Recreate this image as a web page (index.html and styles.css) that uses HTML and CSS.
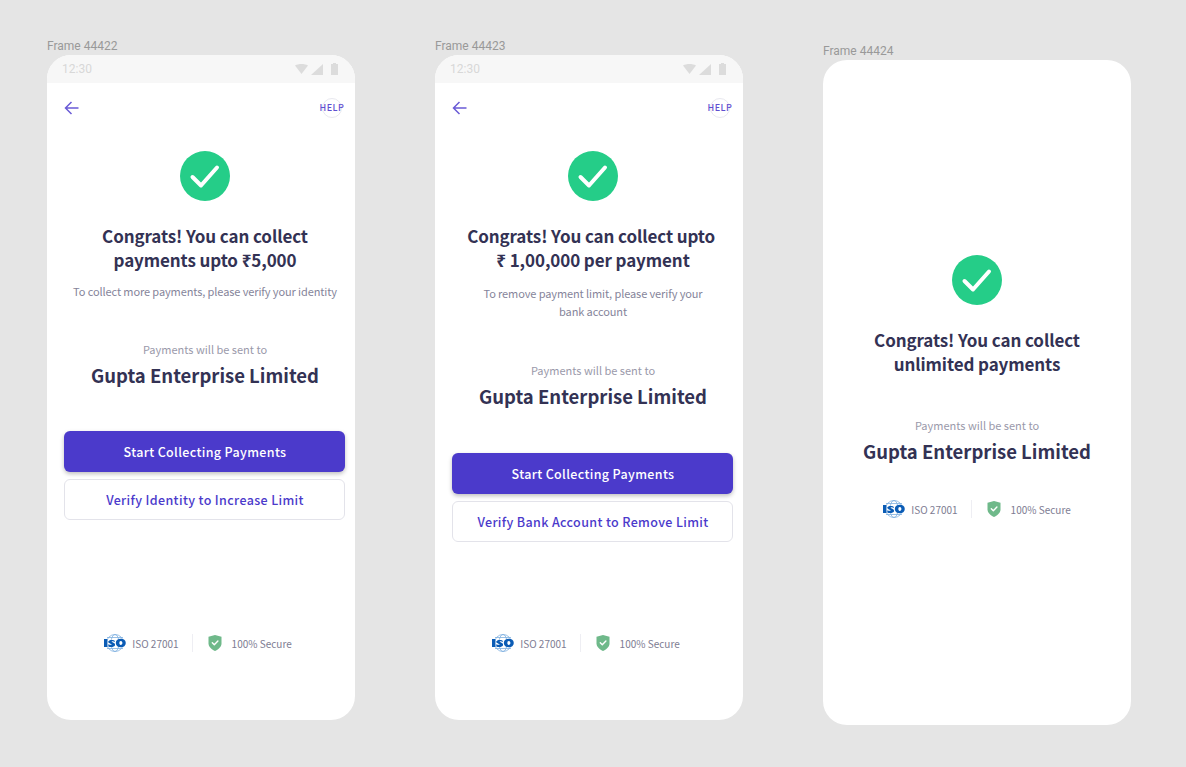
FILE: index.html
```html
<!DOCTYPE html>
<html lang="en">
<head>
    <meta charset="UTF-8">
    <meta name="viewport" content="width=device-width, initial-scale=1.0">
    <title>Payment limit screens</title>
    <link rel="stylesheet" href="styles.css">
</head>
<body>
    <svg class="icon-defs" width="0" height="0">
        <symbol id="tick" viewBox="0 0 50 50">
            <circle cx="25" cy="25" r="25" fill="#25cd88"/>
            <path d="M12.5 26 L21 34.5 L37 16.5" fill="none" stroke="#fff" stroke-width="4" stroke-linecap="round" stroke-linejoin="round"/>
        </symbol>
        <symbol id="iso" viewBox="0 0 22 18">
            <ellipse cx="11" cy="9" rx="8.5" ry="8.5" fill="none" stroke="#7fb0e0" stroke-width=".8"/>
            <ellipse cx="11" cy="9" rx="4" ry="8.5" fill="none" stroke="#7fb0e0" stroke-width=".8"/>
            <path d="M3 3.500h16M3 14.500h16" stroke="#7fb0e0" stroke-width=".8"/>
            <path d="M0 5h3.400v8H0z" fill="#0b5cb5"/>
            <path d="M11 7c-.6-1-5-1.900-6.600.2-1.200 2 3.800 2.400 3.400 3.400-.3.7-2.400.3-3.500-.4v2.300c2 1 6.300.8 6.800-1.500.4-2.300-3.900-2.600-3.500-3.400.2-.5 2-.3 3.400.2z" fill="#0b5cb5"/>
            <path d="M16.800 4.800c-2.700 0-5 1.400-5 4.200s2.300 4.200 5 4.200 5-1.400 5-4.200-2.300-4.200-5-4.200zm0 2.300c1 0 1.600.8 1.600 1.900s-.6 1.900-1.600 1.900-1.600-.8-1.600-1.900.6-1.900 1.600-1.900z" fill="#0b5cb5"/>
        </symbol>
        <symbol id="shield" viewBox="0 0 14 16">
            <path d="M0.500 1.800 L7 0 L13.500 1.800 V8.500 C13.500 12 10 14.700 7 16 C4 14.700 .5 12 .5 8.500 Z" fill="#6fb98a"/>
            <path d="M4.300 7.800 L6.300 9.800 L9.900 6.100" fill="none" stroke="#fff" stroke-width="1.400" stroke-linecap="round" stroke-linejoin="round"/>
        </symbol>
    </svg>

    <div class="canvas">
        <div class="frame">
            <div class="frame-label">Frame 44422</div>
            <div class="phone">
                <div class="status-bar">
                    <span class="clock">12:30</span>
                    <span class="status-icons">
                        <svg width="13" height="10" viewBox="0 0 13 10"><path d="M0 1.500 C3.500 -.5 9.500 -.5 13 1.500 L6.500 10 Z" fill="#dcdcdc"/></svg>
                        <svg width="12" height="11" viewBox="0 0 12 11"><path d="M12 0 V11 H0 Z" fill="#dcdcdc"/></svg>
                        <svg class="battery" width="7" height="12" viewBox="0 0 7 12"><path d="M2 0 H5 V1 H7 V12 H0 V1 H2 Z" fill="#dcdcdc"/></svg>
                    </span>
                </div>
                <div class="nav-bar">
                    <svg class="back" width="16" height="14" viewBox="0 0 16 14"><path d="M14.500 7 H1.500 M7.500 1 L1.500 7 L7.500 13" fill="none" stroke="#6a5bd6" stroke-width="1.500"/></svg>
                    <span class="help">HELP</span>
                </div>
                <div class="content first">
                    <svg class="tick"><use href="#tick"/></svg>
                    <h2 class="title">Congrats! You can collect<br>payments upto ₹5,000</h2>
                    <p class="note">To collect more payments, please verify your identity</p>
                    <p class="sent-label gap-one">Payments will be sent to</p>
                    <p class="company">Gupta Enterprise Limited</p>
                    <button class="btn btn-primary">Start Collecting Payments</button>
                    <button class="btn btn-outline">Verify Identity to Increase Limit</button>
                </div>
                <div class="trust bottom">
                    <svg class="iso"><use href="#iso"/></svg>
                    <span class="iso-text">ISO 27001</span>
                    <i class="divider"></i>
                    <svg class="shield"><use href="#shield"/></svg>
                    <span>100% Secure</span>
                </div>
            </div>
        </div>

        <div class="frame">
            <div class="frame-label">Frame 44423</div>
            <div class="phone">
                <div class="status-bar">
                    <span class="clock">12:30</span>
                    <span class="status-icons">
                        <svg width="13" height="10" viewBox="0 0 13 10"><path d="M0 1.500 C3.500 -.5 9.500 -.5 13 1.500 L6.500 10 Z" fill="#dcdcdc"/></svg>
                        <svg width="12" height="11" viewBox="0 0 12 11"><path d="M12 0 V11 H0 Z" fill="#dcdcdc"/></svg>
                        <svg class="battery" width="7" height="12" viewBox="0 0 7 12"><path d="M2 0 H5 V1 H7 V12 H0 V1 H2 Z" fill="#dcdcdc"/></svg>
                    </span>
                </div>
                <div class="nav-bar">
                    <svg class="back" width="16" height="14" viewBox="0 0 16 14"><path d="M14.500 7 H1.500 M7.500 1 L1.500 7 L7.500 13" fill="none" stroke="#6a5bd6" stroke-width="1.500"/></svg>
                    <span class="help">HELP</span>
                </div>
                <div class="content first">
                    <svg class="tick"><use href="#tick"/></svg>
                    <h2 class="title">Congrats! You can collect upto&nbsp;<br>₹ 1,00,000 per payment</h2>
                    <p class="note note-two">To remove payment limit, please verify your<br>bank account</p>
                    <p class="sent-label gap-one">Payments will be sent to</p>
                    <p class="company">Gupta Enterprise Limited</p>
                    <button class="btn btn-primary">Start Collecting Payments</button>
                    <button class="btn btn-outline">Verify Bank Account to Remove Limit</button>
                </div>
                <div class="trust bottom">
                    <svg class="iso"><use href="#iso"/></svg>
                    <span class="iso-text">ISO 27001</span>
                    <i class="divider"></i>
                    <svg class="shield"><use href="#shield"/></svg>
                    <span>100% Secure</span>
                </div>
            </div>
        </div>

        <div class="frame frame-low">
            <div class="frame-label">Frame 44424</div>
            <div class="phone">
                <div class="content last">
                    <svg class="tick"><use href="#tick"/></svg>
                    <h2 class="title">Congrats! You can collect<br>unlimited payments</h2>
                    <p class="sent-label gap-two">Payments will be sent to</p>
                    <p class="company">Gupta Enterprise Limited</p>
                    <div class="trust inline">
                        <svg class="iso"><use href="#iso"/></svg>
                        <span class="iso-text">ISO 27001</span>
                        <i class="divider"></i>
                        <svg class="shield"><use href="#shield"/></svg>
                        <span>100% Secure</span>
                    </div>
                </div>
            </div>
        </div>
    </div>
</body>
</html>
```

FILE: styles.css
```css
* {
    box-sizing: border-box;
}

body {
    margin: 0;
    height: 767px;
    overflow: hidden;
    background-color: #e5e5e5;
    font-family: "Noto Sans CJK SC", "Noto Sans", sans-serif;
}

.icon-defs {
    position: absolute;
}

.canvas {
    display: flex;
    gap: 80px;
    padding: 39px 0 0 47px;
}

.frame {
    width: 308px;
}

.frame-low {
    margin-top: 5px;
}

.frame-label {
    height: 16px;
    font-family: Roboto, sans-serif;
    font-size: 12px;
    line-height: 15px;
    color: #999;
}

.phone {
    display: flex;
    flex-direction: column;
    height: 665px;
    background: white;
    border-radius: 24px;
    overflow: hidden;
}

.status-bar {
    display: flex;
    align-items: center;
    justify-content: space-between;
    height: 28px;
    padding: 0 17px 0 15px;
    background: #f7f7f7;
}

.clock {
    font-family: Roboto, sans-serif;
    font-size: 12px;
    color: #d8d8d8;
}

.status-icons {
    display: flex;
    align-items: center;
    gap: 3px;
}

.battery {
    margin-left: 5px;
}

.nav-bar {
    display: flex;
    align-items: center;
    justify-content: space-between;
    height: 50px;
    padding: 0 13px 0 17px;
}

.help {
    display: flex;
    align-items: center;
    justify-content: center;
    width: 20px;
    height: 20px;
    padding-bottom: 1px;
    border: 1px solid #e8e8ef;
    border-radius: 50%;
    font-size: 9px;
    font-weight: 500;
    letter-spacing: 0.5px;
    color: #5f4fd0;
    white-space: nowrap;
}

.content {
    display: flex;
    flex-direction: column;
    align-items: center;
    text-align: center;
}

.content.first {
    padding: 18px 0 0 8px;
}

.content.last {
    padding-top: 195px;
}

.tick {
    width: 50px;
    height: 50px;
}

.title {
    margin: 23px 0 0;
    font-size: 17px;
    font-weight: 700;
    line-height: 24px;
    letter-spacing: -0.1px;
    color: #333254;
}

.note {
    margin: 10px 0 0;
    font-size: 11px;
    line-height: 18px;
    letter-spacing: -0.1px;
    color: #85849a;
}

.note-two {
    margin: 12px 0 1px;
}

.sent-label {
    margin: 0;
    font-size: 11px;
    line-height: 16px;
    color: #9a99aa;
}

.gap-one {
    margin-top: 41px;
}

.gap-two {
    margin-top: 41px;
}

.company {
    margin: 4px 0 0;
    font-size: 18.5px;
    font-weight: 700;
    line-height: 28px;
    color: #333254;
}

.btn {
    display: block;
    width: 281px;
    height: 41px;
    margin-right: 2px;
    padding: 0 0 0 2px;
    border-radius: 6px;
    font-family: inherit;
    font-size: 12.5px;
    font-weight: 500;
    letter-spacing: 0.36px;
}

.btn-primary {
    margin-top: 42px;
    border: none;
    background: #4b3acb;
    color: white;
    box-shadow: 0 2px 4px rgba(0,0,0,0.25);
}

.note-two ~ .btn-primary {
    margin-top: 43px;
}

.btn-outline {
    margin-top: 7px;
    border: 1px solid #e3e3ea;
    background: white;
    color: #4b3acb;
}

.trust {
    display: flex;
    align-items: center;
    justify-content: center;
    font-size: 10px;
    color: #7d7c92;
}

.trust.bottom {
    margin-top: auto;
    margin-bottom: 68px;
    padding-right: 6px;
}

.trust.inline {
    margin-top: 35px;
}

.iso {
    width: 22px;
    height: 18px;
    margin-right: 6px;
}

.divider {
    width: 1px;
    height: 18px;
    margin: 0 15px 0 13px;
    background: #eeeef3;
}

.shield {
    width: 14px;
    height: 16px;
    margin-right: 10px;
}
```
